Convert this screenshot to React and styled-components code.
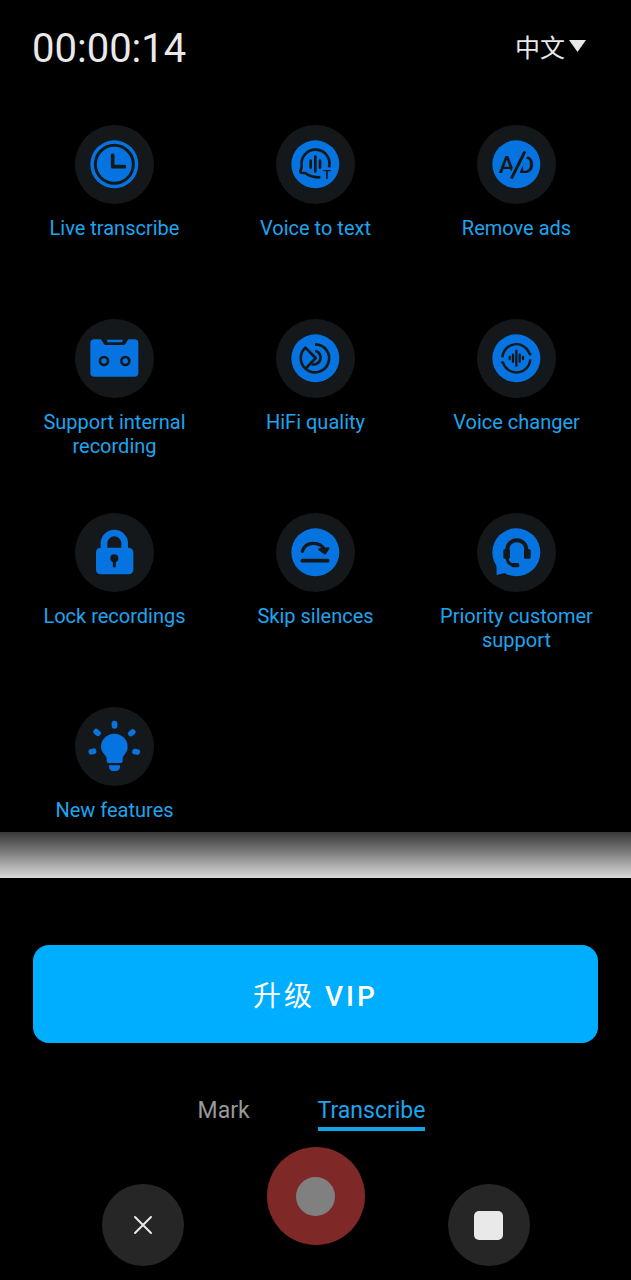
import { useState } from 'react';
import styled, { createGlobalStyle } from 'styled-components';

const blue = '#0573e0';
const plate = '#15181a';
const accent = '#1fa4ee';

const GlobalStyle = createGlobalStyle`
  * {
    box-sizing: border-box;
  }
  body {
    margin: 0;
    background: #000;
    color: #e9e9e9;
    font-family: Roboto, 'Noto Sans CJK SC', sans-serif;
  }
  button,
  select {
    border: 0;
    padding: 0;
    background: none;
    color: inherit;
    font: inherit;
    cursor: pointer;
  }
`;

const Header = styled.header`
  display: flex;
  justify-content: space-between;
  align-items: center;
  height: 98px;
  padding: 0 45px 0 32px;
`;

const Timer = styled.time`
  font-size: 40px;
  line-height: 48px;
`;

const Language = styled.label`
  display: flex;
  align-items: center;
  gap: 4px;
  select {
    appearance: none;
    field-sizing: content;
    font-size: 25px;
    line-height: 36px;
    outline: none;
  }
  option {
    color: #000;
  }
  svg {
    margin-bottom: 6px;
  }
`;

const FeatureGrid = styled.main`
  display: grid;
  grid-template-columns: repeat(3, 1fr);
  grid-template-rows: repeat(3, 194px) auto;
  padding: 27px 14px 10px;
`;

const FeatureButton = styled.button`
  display: flex;
  flex-direction: column;
  align-items: center;
  align-self: start;
  gap: 12px;
  color: ${accent};
  font-size: 20px;
  line-height: 24px;
`;

const Plate = styled.svg`
  width: 79px;
  height: 79px;
  border-radius: 50%;
  background: ${plate};
`;

const Fade = styled.div`
  height: 46px;
  background: linear-gradient(#383838, #868686 50%, #dadada);
`;

const Footer = styled.footer`
  padding: 67px 33px 14px;
`;

const VipButton = styled.button`
  display: block;
  width: 100%;
  height: 98px;
  border-radius: 16px;
  background: #00aeff;
  color: #fff;
  font-size: 28px;
  letter-spacing: 3px;
  span {
    font-weight: 500;
  }
`;

const Tabs = styled.nav`
  display: flex;
  justify-content: center;
  gap: 68px;
  margin-top: 50px;
  padding-right: 8px;
`;

const Tab = styled.button`
  padding-top: 2px;
  border-bottom: 4px solid ${(props) => (props.$active ? '#12a4e8' : 'transparent')};
  color: ${(props) => (props.$active ? accent : '#999')};
  font-size: 23px;
  line-height: 32px;
`;

const Controls = styled.div`
  display: flex;
  justify-content: center;
  gap: 83px;
  margin-top: 16px;
`;

const RoundButton = styled.button`
  display: grid;
  place-items: center;
  flex: none;
  width: 82px;
  height: 82px;
  margin-top: 37px;
  border-radius: 50%;
  background: #262626;
`;

const RecordButton = styled(RoundButton)`
  width: 98px;
  height: 98px;
  margin-top: 0;
  background: #7e2828;
`;

const RecordDot = styled.span`
  width: 39px;
  height: 39px;
  border-radius: 50%;
  background: #808080;
`;

const StopSquare = styled.span`
  width: 29px;
  height: 29px;
  border-radius: 5px;
  background: #e9e9e9;
`;

// every icon is drawn on a 237 x 237 plate
function Icon({ disc = true, children }) {
  return (
    <Plate viewBox="0 0 237 237" fill="none" stroke={plate} strokeWidth="9" aria-hidden="true">
      {disc && <circle cx="118" cy="118" r="72" fill={blue} stroke="none" />}
      {children}
    </Plate>
  );
}

const ClockIcon = () => (
  <Icon>
    <circle cx="118" cy="118" r="57" />
    <path d="M113 91V125H148" strokeWidth="11" strokeLinecap="round" strokeLinejoin="round" />
  </Icon>
);

const VoiceTextIcon = () => (
  <Icon>
    <path
      d="M159 127A42 42 0 1 0 77 122C78 130 72 136 73 141C74 144 80 144 88 144C99 154 114 157 133 157"
      strokeWidth="8"
      strokeLinejoin="round"
    />
    <path d="M104 107V128M118 95V139M132 107V128" strokeWidth="8" strokeLinecap="round" />
    <text x="153" y="162" fontSize="40" fontWeight="500" textAnchor="middle" fill={plate} stroke="none">
      T
    </text>
  </Icon>
);

const NoAdsIcon = () => (
  <Icon>
    <g fill={plate} stroke="none" fontSize="74" fontWeight="500">
      <text x="65" y="144">
        A
      </text>
      <text x="124" y="144">
        D
      </text>
    </g>
    <path d="M150 68L102 168" stroke={blue} strokeWidth="24" />
    <path d="M144 79L103 161" strokeWidth="9" />
  </Icon>
);

const CassetteIcon = () => (
  <Icon disc={false}>
    <path
      d="M58 61H78L87 75Q89 78 92 78H146Q149 78 151 75L160 61H178Q190 61 190 73V161Q190 173 178 173H58Q46 173 46 161V73Q46 61 58 61Z"
      fill={blue}
      stroke="none"
    />
    <path d="M95 62H144L141 70H98Z" fill={blue} stroke="none" />
    <circle cx="87" cy="126" r="12" strokeWidth="8" />
    <circle cx="151" cy="126" r="12" strokeWidth="8" />
  </Icon>
);

const HifiIcon = () => (
  <Icon>
    <g strokeWidth="8" strokeLinejoin="round">
      <path d="M117 76A42 42 0 1 1 89 149" />
      <path d="M89 149L119 117L88 86A42 42 0 0 0 89 149Z" />
      <path d="M118 95A21 21 0 1 1 107 136" />
    </g>
  </Icon>
);

const ChangerIcon = () => (
  <Icon>
    <g strokeWidth="7">
      <path d="M76 115A42 42 0 0 1 158 105L163 107" />
      <path d="M73 128L78 131A42 42 0 0 0 160 121" />
    </g>
    <path d="M98 114V120M108 107V128M118 95V140M128 107V128M138 114V120" strokeWidth="7" strokeLinecap="round" />
  </Icon>
);

const LockIcon = () => (
  <Icon disc={false}>
    <path d="M87 110V91A31 31 0 0 1 149 91V110" stroke={blue} strokeWidth="20" />
    <rect x="63" y="104" width="112" height="80" rx="14" fill={blue} stroke="none" />
    <circle cx="118" cy="136" r="12" fill={plate} stroke="none" />
    <path d="M118 138V159" strokeWidth="9" strokeLinecap="round" />
  </Icon>
);

const SkipIcon = () => (
  <Icon>
    <path d="M79 115C84 99 96 91 112 91C129 91 141 99 147 112" strokeWidth="10" strokeLinecap="round" />
    <path d="M130 109L157 106L147 121Z" fill={plate} strokeWidth="7" strokeLinejoin="round" />
    <path d="M79 143H155" strokeWidth="11" strokeLinecap="round" />
  </Icon>
);

const SupportIcon = () => (
  <Icon>
    <path d="M58 148L59 186L98 176Z" fill={blue} stroke="none" />
    <path d="M91 114V110A28 28 0 0 1 148 110V114" strokeWidth="12" />
    <g fill={plate} stroke="none">
      <rect x="79" y="109" width="20" height="28" rx="4" />
      <rect x="141" y="109" width="20" height="28" rx="4" />
      <rect x="103" y="150" width="24" height="13" rx="5" />
    </g>
    <path d="M90 134C91 147 98 155 110 156" strokeWidth="9" />
  </Icon>
);

const BulbIcon = () => (
  <Icon disc={false}>
    <g fill={blue} stroke="none">
      <path d="M118 80A40 40 0 0 1 158 120C158 138 143 144 143 155V162Q143 168 137 168H101Q95 168 95 162V155C95 144 78 138 78 120A40 40 0 0 1 118 80Z" />
      <path d="M102 175H135V180Q133 192 123 192H114Q104 192 102 180Z" />
      <rect x="110" y="41" width="17" height="24" rx="8" />
      <rect x="110" y="41" width="17" height="24" rx="8" transform="rotate(-49 118 122)" />
      <rect x="110" y="41" width="17" height="24" rx="8" transform="rotate(49 118 122)" />
      <rect x="110" y="41" width="17" height="24" rx="8" transform="rotate(-102 118 120)" />
      <rect x="110" y="41" width="17" height="24" rx="8" transform="rotate(102 118 120)" />
    </g>
  </Icon>
);

const features = [
  { label: 'Live transcribe', icon: ClockIcon },
  { label: 'Voice to text', icon: VoiceTextIcon },
  { label: 'Remove ads', icon: NoAdsIcon },
  { label: 'Support internal recording', icon: CassetteIcon },
  { label: 'HiFi quality', icon: HifiIcon },
  { label: 'Voice changer', icon: ChangerIcon },
  { label: 'Lock recordings', icon: LockIcon },
  { label: 'Skip silences', icon: SkipIcon },
  { label: 'Priority customer support', icon: SupportIcon },
  { label: 'New features', icon: BulbIcon },
];

export default function App() {
  const [tab, setTab] = useState('Transcribe');

  return (
    <>
      <GlobalStyle />
      <Header>
        <Timer>00:00:14</Timer>
        <Language>
          <select aria-label="Language" defaultValue="zh">
            <option value="zh">中文</option>
          </select>
          <svg width="17" height="12" viewBox="0 0 34 24" fill="#e9e9e9" aria-hidden="true">
            <path d="M0 0H34L17 24Z" />
          </svg>
        </Language>
      </Header>
      <FeatureGrid>
        {features.map(({ label, icon: FeatureIcon }) => (
          <FeatureButton key={label} type="button">
            <FeatureIcon />
            {label}
          </FeatureButton>
        ))}
      </FeatureGrid>
      <Fade />
      <Footer>
        <VipButton type="button">
          升级 <span>VIP</span>
        </VipButton>
        <Tabs>
          {['Mark', 'Transcribe'].map((name) => (
            <Tab key={name} type="button" $active={tab === name} onClick={() => setTab(name)}>
              {name}
            </Tab>
          ))}
        </Tabs>
        <Controls>
          <RoundButton type="button" aria-label="Cancel">
            <svg width="20" height="20" viewBox="0 0 20 20" stroke="#e9e9e9" strokeWidth="2" strokeLinecap="round">
              <path d="M2 2L18 18M18 2L2 18" />
            </svg>
          </RoundButton>
          <RecordButton type="button" aria-label="Record">
            <RecordDot />
          </RecordButton>
          <RoundButton type="button" aria-label="Stop">
            <StopSquare />
          </RoundButton>
        </Controls>
      </Footer>
    </>
  );
}
